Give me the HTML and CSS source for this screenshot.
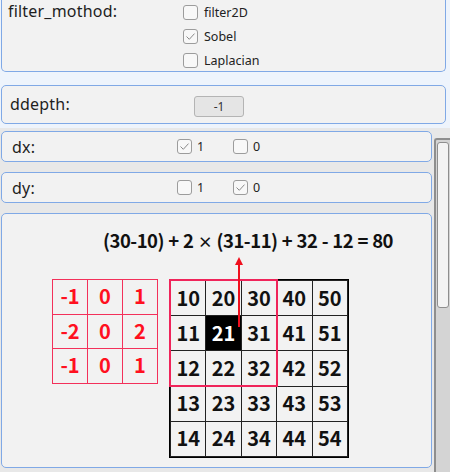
FILE: index.html
```html
<!DOCTYPE html>
<html>
<head>
<meta charset="utf-8">
<link rel="stylesheet" href="styles.css">
</head>
<body>
<div class="group group-top">
  <div class="label">filter_mothod:</div>
  <div class="options">
    <div class="opt"><span class="cb"></span><span class="opt-text">filter2D</span></div>
    <div class="opt"><span class="cb checked"><svg viewBox="0 0 15 15" width="15" height="15"><path d="M3.5 7.5 L6.3 10.3 L11.5 4.6" fill="none" stroke="#8a8a8a" stroke-width="1"/></svg></span><span class="opt-text">Sobel</span></div>
    <div class="opt"><span class="cb"></span><span class="opt-text">Laplacian</span></div>
  </div>
</div>

<div class="group group-ddepth">
  <div class="label">ddepth:</div>
  <div class="spin">-1</div>
</div>

<div class="scroll-area">
  <div class="scroll-content">
    <div class="group group-row">
      <div class="label label-small">dx:</div>
      <div class="inline-opts">
        <div class="opt"><span class="cb checked"><svg viewBox="0 0 15 15" width="15" height="15"><path d="M3.5 7.5 L6.3 10.3 L11.5 4.6" fill="none" stroke="#8a8a8a" stroke-width="1"/></svg></span><span class="opt-text">1</span></div>
        <div class="opt"><span class="cb"></span><span class="opt-text">0</span></div>
      </div>
    </div>
    <div class="group group-row">
      <div class="label label-small">dy:</div>
      <div class="inline-opts">
        <div class="opt"><span class="cb"></span><span class="opt-text">1</span></div>
        <div class="opt"><span class="cb checked"><svg viewBox="0 0 15 15" width="15" height="15"><path d="M3.5 7.5 L6.3 10.3 L11.5 4.6" fill="none" stroke="#8a8a8a" stroke-width="1"/></svg></span><span class="opt-text">0</span></div>
      </div>
    </div>
    <div class="group group-big">
      <div class="formula">(30-10) + 2 <span class="times">×</span> (31-11) + 32 - 12 = 80</div>
      <div class="tables">
        <div class="kernel">
          <div class="k">-1</div><div class="k">0</div><div class="k">1</div>
          <div class="k">-2</div><div class="k">0</div><div class="k">2</div>
          <div class="k">-1</div><div class="k">0</div><div class="k">1</div>
        </div>
        <div class="grid-wrap">
          <div class="grid">
            <div class="c">10</div><div class="c">20</div><div class="c">30</div><div class="c">40</div><div class="c">50</div>
            <div class="c">11</div><div class="c hl">21</div><div class="c">31</div><div class="c">41</div><div class="c">51</div>
            <div class="c">12</div><div class="c">22</div><div class="c">32</div><div class="c">42</div><div class="c">52</div>
            <div class="c">13</div><div class="c">23</div><div class="c">33</div><div class="c">43</div><div class="c">53</div>
            <div class="c">14</div><div class="c">24</div><div class="c">34</div><div class="c">44</div><div class="c">54</div>
          </div>
          <div class="window"></div>
        </div>
      </div>
      <svg class="arrow" width="12" height="72" viewBox="0 0 12 72">
        <path d="M6 4 L6 71" stroke="#f0101e" stroke-width="2"/>
        <path d="M2 9 L6 1 L10 9 Z" fill="#f0101e"/>
      </svg>
    </div>
  </div>
  <div class="scrollbar">
    <div class="thumb"></div>
  </div>
</div>
</body>
</html>
```

FILE: styles.css
```css
* { box-sizing: border-box; }
html, body {
  margin: 0;
  padding: 0;
}
body {
  width: 450px;
  height: 472px;
  overflow: hidden;
  background: #eef4fc;
  font-family: "Noto Sans", "Open Sans", sans-serif;
  color: #1e1e1e;
}
.group {
  background: #f2f2f2;
  border: 1px solid #80a9e6;
  border-radius: 5px;
}
.group-top {
  margin-left: 1px;
  width: 445px;
  height: 72px;
  border-top: none;
  border-radius: 0 0 5px 5px;
  display: flex;
}
.label {
  font-size: 16px;
  line-height: 20px;
  letter-spacing: 0.2px;
}
.group-top .label {
  padding: 1px 0 0 6px;
  width: 181px;
}
.options {
  display: flex;
  flex-direction: column;
  gap: 8px;
  padding-top: 4px;
}
.opt {
  display: flex;
  align-items: center;
  height: 16px;
}
.cb {
  width: 15px;
  height: 15px;
  border: 1px solid #9c9c9c;
  border-radius: 3px;
  background: #f8f8f8;
  display: inline-block;
  flex: none;
  position: relative;
}
.cb svg {
  position: absolute;
  left: -1px;
  top: -1px;
}
.opt-text {
  font-size: 12.5px;
  margin-left: 6px;
  color: #222;
}
.group-ddepth {
  margin: 13px 0 0 1px;
  width: 445px;
  height: 39px;
  display: flex;
  align-items: flex-start;
}
.group-ddepth .label {
  padding: 8px 0 0 8px;
  width: 192px;
}
.spin {
  margin-top: 10px;
  width: 50px;
  height: 21px;
  border: 1px solid #b4b4b4;
  border-radius: 3px;
  background: #e5e5e5;
  font-size: 12px;
  line-height: 19px;
  text-align: center;
  color: #333;
}
.scroll-area {
  margin-top: 4px;
  height: 349px;
  background: #e8e8e8;
  display: flex;
}
.scroll-content {
  width: 434px;
  padding: 3px 0 0 1px;
  display: flex;
  flex-direction: column;
  gap: 10px;
}
.group-row {
  width: 431px;
  height: 31px;
  display: flex;
  align-items: center;
}
.label-small {
  padding-left: 10px;
  width: 175px;
}
.inline-opts {
  display: flex;
  gap: 24px;
}
.inline-opts .opt-text {
  margin-left: 5px;
  font-size: 12.5px;
}
.inline-opts .opt {
  width: 32px;
}
.group-big {
  width: 431px;
  height: 255px;
  flex: none;
  position: relative;
  display: flex;
  flex-direction: column;
}
.formula {
  margin: 14px 0 0 101px;
  font-family: "Noto Sans CJK SC", "Noto Sans", sans-serif;
  font-weight: 700;
  font-size: 18.5px;
  line-height: 24px;
  letter-spacing: -0.5px;
  word-spacing: 0.6px;
  color: #111;
  white-space: nowrap;
}
.times {
  font-size: 15px;
}
.tables {
  display: flex;
  align-items: flex-start;
  margin: 25px 0 0 50px;
  gap: 11px;
}
.kernel {
  display: grid;
  grid-template-columns: repeat(3, 34px);
  grid-auto-rows: 33.5px;
  gap: 1px;
  padding: 1px;
  background: #f3305a;
}
.k, .c {
  display: flex;
  align-items: center;
  justify-content: center;
  background: #f2f2f2;
  font-family: "Noto Sans CJK SC", "Noto Sans", sans-serif;
  font-weight: 700;
  font-size: 20px;
  line-height: 1;
  padding-bottom: 1px;
}
.k {
  color: #ff1020;
}
.grid-wrap {
  position: relative;
}
.grid {
  display: grid;
  grid-template-columns: repeat(5, 34.4px);
  grid-auto-rows: 34.2px;
  gap: 1px;
  padding: 1px;
  border: 1px solid #000;
  background: #222;
}
.c {
  color: #111;
}
.c.hl {
  background: #000;
  color: #fff;
}
.window {
  position: absolute;
  left: 0;
  top: 0;
  width: 109px;
  height: 108px;
  border: 2px solid #f0245a;
}
.arrow {
  position: absolute;
  left: 231px;
  top: 42px;
}
.scrollbar {
  margin-top: 10px;
  width: 16px;
  height: 339px;
  background: #d4d4d4;
  border-left: 2px solid #8e8e8e;
  border-top: 2px solid #8e8e8e;
  border-radius: 3px 0 0 0;
  padding: 2px 1px 0 1px;
}
.thumb {
  width: 12px;
  height: 166px;
  background: #f3f3f3;
  border: 1px solid #8e8e8e;
  border-radius: 3px;
}
```
